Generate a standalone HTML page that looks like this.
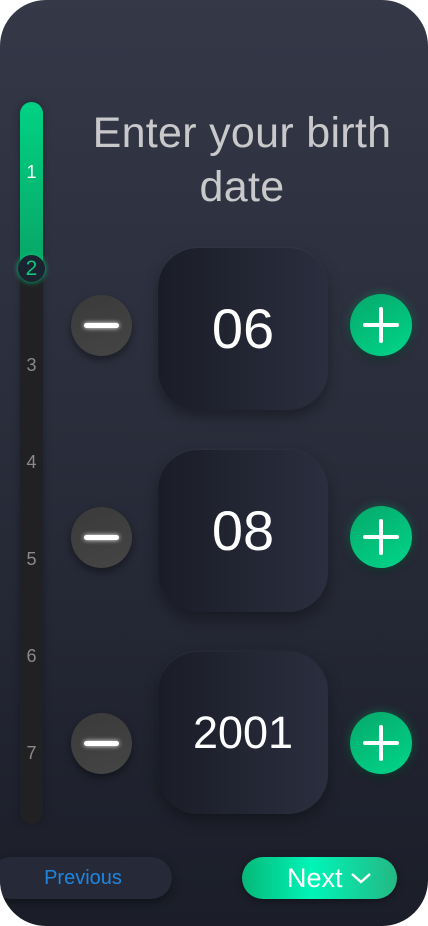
<!DOCTYPE html>
<html><head><style>
*{margin:0;padding:0;box-sizing:border-box}
body{width:428px;height:926px;background:#fff;overflow:hidden;font-family:"Liberation Sans",sans-serif}
.app{position:absolute;left:0;top:0;width:428px;height:926px;border-radius:46px;background:linear-gradient(180deg,#343847 0%,#2a2d3b 45%,#1b1e29 100%);overflow:hidden}
.track{position:absolute;left:20px;top:102px;width:23px;height:722px;border-radius:12px;background:#212124;box-shadow:0 0 8px rgba(0,0,0,.3)}
.fill{position:absolute;left:20px;top:102px;width:23px;height:166px;border-radius:12px 12px 0 0;background:linear-gradient(180deg,#00d283,#0aa566)}
.dot{position:absolute;left:18px;top:255px;width:27px;height:27px;border-radius:50%;background:#1b2230;box-shadow:0 0 6px #00c47a;color:#10c47c;font-size:21px;text-align:center;line-height:27px}
.n{position:absolute;left:20px;width:23px;text-align:center;color:#8a8a8a;font-size:18px}
h1{position:absolute;left:70px;width:344px;top:106px;text-align:center;color:#c9c9cb;font-weight:400;font-size:43px;line-height:54px;letter-spacing:0.3px}
.box{position:absolute;left:158px;width:170px;height:162px;border-radius:40px;background:linear-gradient(90deg,#1a1c27,#2b2e3e);box-shadow:0 6px 14px rgba(0,0,0,.35),0 -1px 2px rgba(255,255,255,.05);color:#fff;font-size:56px;text-align:center;line-height:162px}
.m{position:absolute;left:71px;width:61px;height:61px;border-radius:50%;background:linear-gradient(160deg,#3a3a3a,#454545);box-shadow:0 4px 8px rgba(0,0,0,.4)}
.m::after{content:"";position:absolute;left:13px;top:28px;width:35px;height:5px;border-radius:3px;background:#fff;box-shadow:0 0 5px #fff}
.p{position:absolute;left:350px;width:62px;height:62px;border-radius:50%;background:linear-gradient(150deg,#06a86a,#00d68a);box-shadow:0 0 10px rgba(0,210,130,.35),0 4px 8px rgba(0,0,0,.4)}
.p::before{content:"";position:absolute;left:13px;top:29px;width:36px;height:4px;background:#fff;border-radius:2px}
.p::after{content:"";position:absolute;left:29px;top:13px;width:4px;height:36px;background:#fff;border-radius:2px}
.prev{position:absolute;left:-10px;top:857px;width:182px;height:42px;border-radius:21px;background:#262938;box-shadow:0 4px 10px rgba(0,0,0,.4);color:#1f86df;font-size:20px;text-align:center;line-height:42px;padding-left:4px}
.next{position:absolute;left:242px;top:857px;width:155px;height:42px;border-radius:21px;background:linear-gradient(90deg,#05b877,#00f5b8 45%,#24b883);box-shadow:0 2px 8px rgba(0,0,0,.4);color:#fff;font-size:27px;line-height:42px;padding-left:45px}
</style></head><body><div class="app">
<div class="track"></div><div class="fill"></div>
<div class="n" style="top:162px;color:#fff">1</div>
<div class="dot">2</div>
<div class="n" style="top:355px">3</div>
<div class="n" style="top:452px">4</div>
<div class="n" style="top:549px">5</div>
<div class="n" style="top:646px">6</div>
<div class="n" style="top:743px">7</div>
<h1>Enter your birth<br>date</h1>
<div class="m" style="top:295px"></div><div class="box" style="top:248px">06</div><div class="p" style="top:294px"></div>
<div class="m" style="top:507px"></div><div class="box" style="top:450px">08</div><div class="p" style="top:506px"></div>
<div class="m" style="top:713px"></div><div class="box" style="top:652px;font-size:45px">2001</div><div class="p" style="top:712px"></div>
<div class="prev">Previous</div>
<div class="next">Next <svg width="22" height="14" viewBox="0 0 22 14" style="vertical-align:2px"><path d="M2 3l9 8 9-8" stroke="#fff" stroke-width="2.5" fill="none"/></svg></div>
</div></body></html>
